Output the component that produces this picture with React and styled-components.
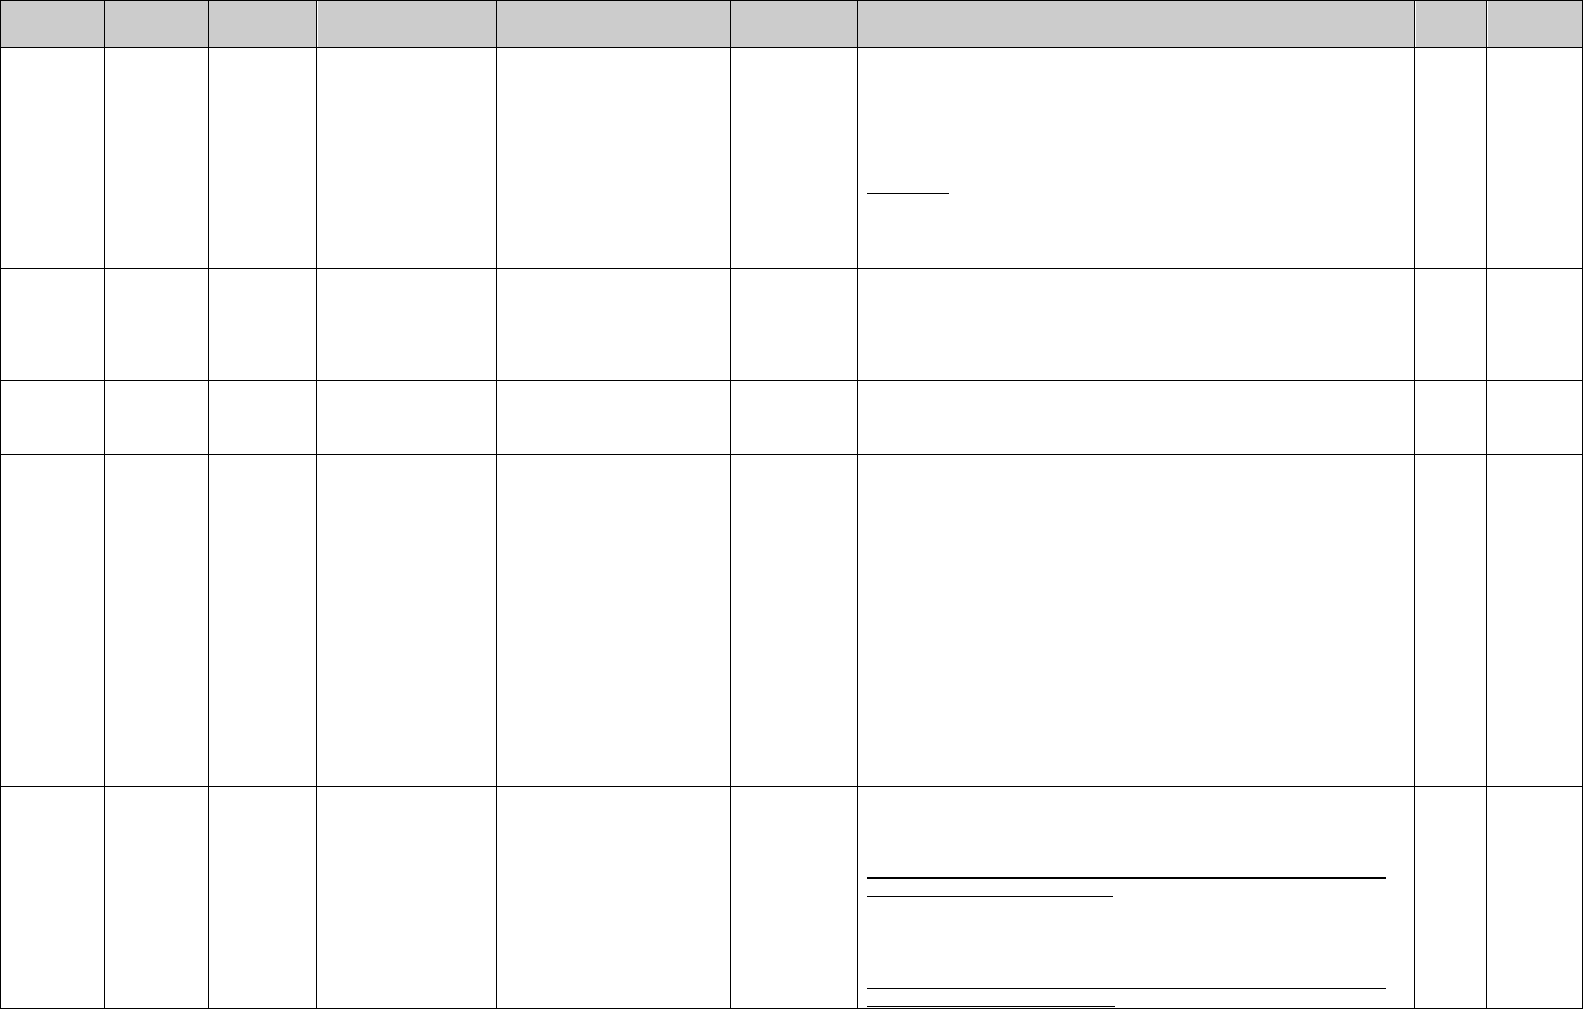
import React from 'react';
import styled, { createGlobalStyle } from 'styled-components';

const GlobalStyle = createGlobalStyle`
  html, body {
    margin: 0;
    padding: 0;
    background: #ffffff;
    font-family: "Liberation Sans", Arial, sans-serif;
  }
`;

const columns = [104, 104, 108, 180, 234, 127, 557, 72, 96];
const rowHeights = [221, 112, 74, 332, 222];

const Grid = styled.div`
  display: grid;
  grid-template-columns: ${columns.map((w) => `${w}px`).join(' ')};
  grid-template-rows: 47px ${rowHeights.map((h) => `${h}px`).join(' ')};
  width: max-content;
  border-top: 1px solid #000;
  border-left: 1px solid #000;
`;

const Cell = styled.div`
  box-sizing: border-box;
  border-right: 1px solid #000;
  border-bottom: 1px solid #000;
  background: ${(p) => (p.$header ? '#cccccc' : '#ffffff')};
  box-shadow: ${(p) => (p.$inset ? 'inset 1px 0 0 #ffffff' : 'none')};
  display: flex;
  flex-direction: column;
  padding-left: ${(p) => (p.$pad ? '9px' : '0')};
`;

const Blank = styled.span`
  display: block;
  width: ${(p) => p.$width}px;
  margin-top: ${(p) => p.$top}px;
  border-bottom: ${(p) => p.$weight || 1}px solid #000;
  height: 0;
`;

const notesByRow = [
  [{ top: 145, width: 82 }],
  [],
  [],
  [],
  [
    { top: 90, width: 519, weight: 2 },
    { top: 17, width: 246 },
    { top: 91, width: 519 },
    { top: 17, width: 248 },
  ],
];

const insetHeaders = [3, 7, 8];

export default function App() {
  return (
    <>
      <GlobalStyle />
      <Grid>
        {columns.map((w, i) => (
          <Cell key={`h${i}`} $header $inset={insetHeaders.includes(i)} />
        ))}
        {rowHeights.map((h, r) =>
          columns.map((w, c) => {
            const blanks = c === 6 ? notesByRow[r] : [];
            return (
              <Cell key={`${r}-${c}`} $pad={c === 6}>
                {blanks.map((b, i) => (
                  <Blank key={i} $top={b.top} $width={b.width} $weight={b.weight} />
                ))}
              </Cell>
            );
          })
        )}
      </Grid>
    </>
  );
}
